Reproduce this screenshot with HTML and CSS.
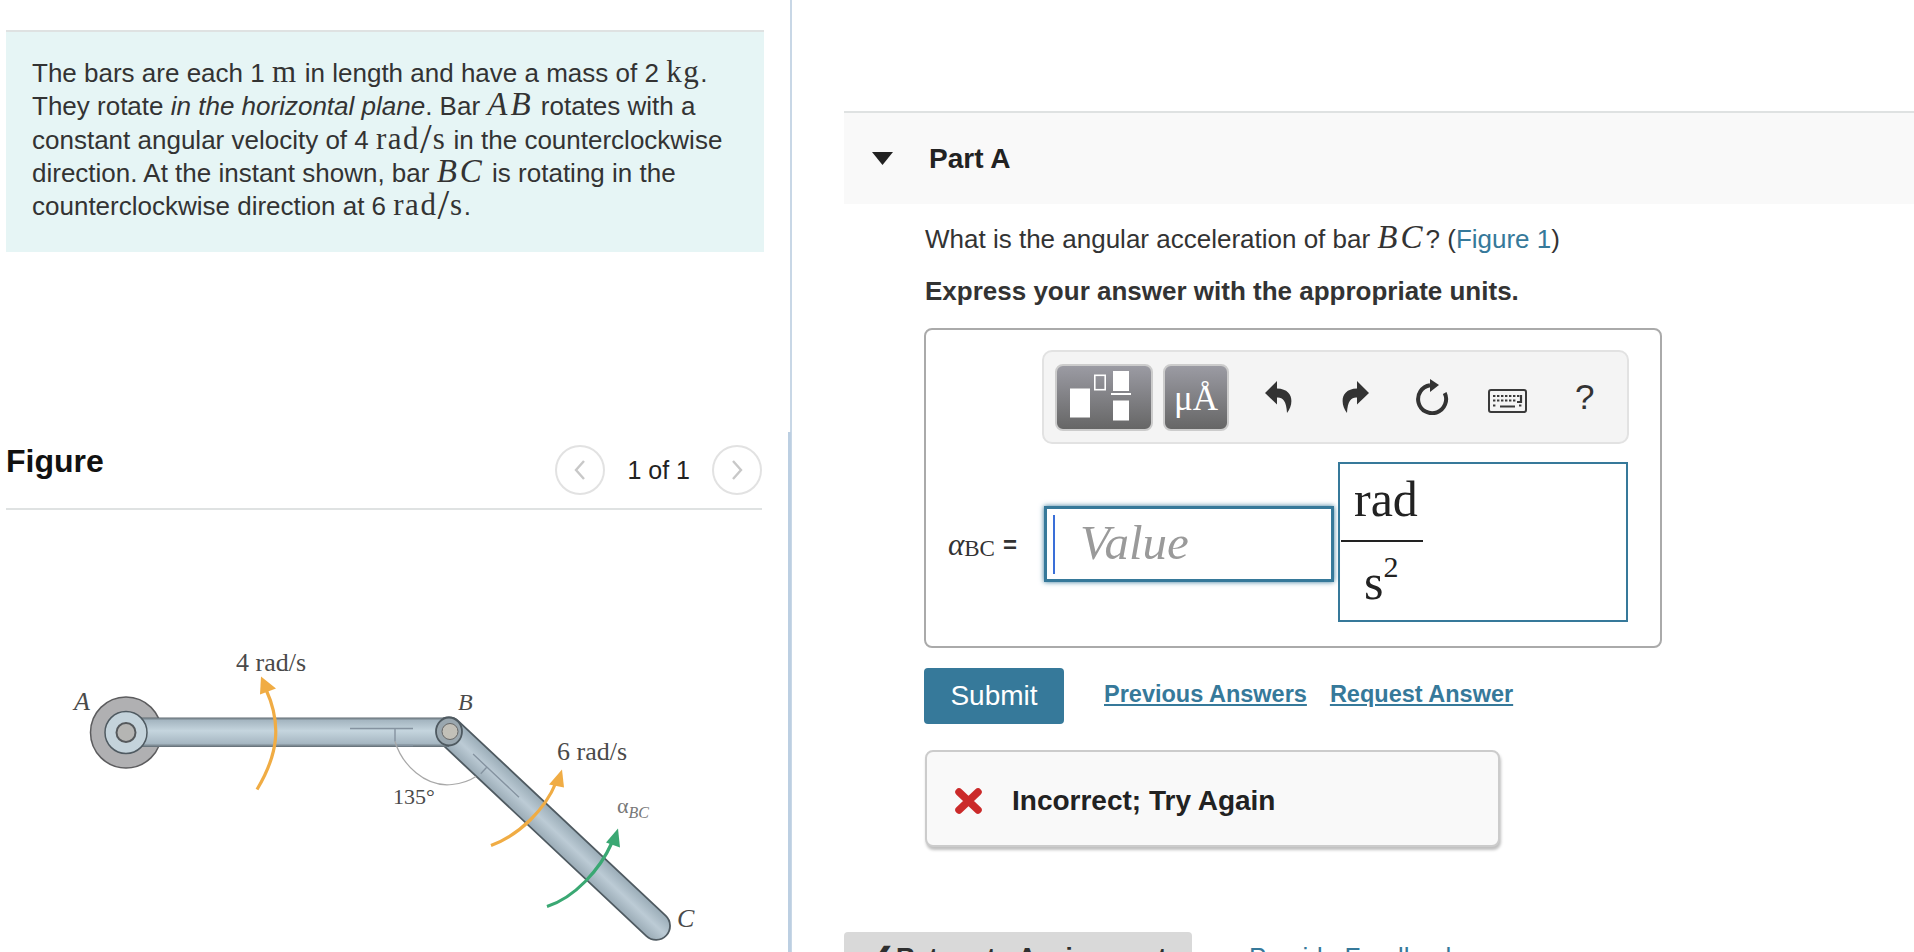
FILE: index.html
```html
<!DOCTYPE html>
<html lang="en">
<head>
<meta charset="utf-8">
<title>Part A</title>
<link rel="stylesheet" href="styles.css">
</head>
<body>
<div class="page">
  <aside class="left">
    <div class="problem">
      <p>The bars are each 1 <span class="mr">m</span> in length and have a mass of 2 <span class="mr">kg</span>. They rotate <em>in the horizontal plane</em>. Bar <span class="mi">AB</span> rotates with a constant angular velocity of 4 <span class="mr">rad</span><span class="sl">/</span><span class="mr">s</span> in the counterclockwise direction. At the instant shown, bar <span class="mi">BC</span> is rotating in the counterclockwise direction at 6 <span class="mr">rad</span><span class="sl">/</span><span class="mr">s</span>.</p>
    </div>
    <div class="fig-head">
      <h2>Figure</h2>
      <div class="pager">
        <button class="circle" aria-label="Previous"><svg width="14" height="24" viewBox="0 0 14 24"><path d="M11 3 3 12l8 9" fill="none" stroke="#c8c8c8" stroke-width="2.4"/></svg></button>
        <span class="count">1 of 1</span>
        <button class="circle" aria-label="Next"><svg width="14" height="24" viewBox="0 0 14 24"><path d="M3 3l8 9-8 9" fill="none" stroke="#c8c8c8" stroke-width="2.4"/></svg></button>
      </div>
    </div>
    <svg class="figure" width="790" height="442" viewBox="0 510.500 790 442">
      <defs>
        <linearGradient id="barh" x1="0" y1="0" x2="0" y2="1">
          <stop offset="0" stop-color="#5f6a71"/><stop offset=".1" stop-color="#a5b6c1"/><stop offset=".45" stop-color="#c5d5de"/><stop offset=".88" stop-color="#a6b7c2"/><stop offset="1" stop-color="#5f6a71"/>
        </linearGradient>
        <linearGradient id="bard" x1="0" y1="0" x2="0" y2="1">
          <stop offset="0" stop-color="#9aacb7"/><stop offset=".5" stop-color="#bccbd5"/><stop offset="1" stop-color="#9aabb6"/>
        </linearGradient>
      </defs>
      <g transform="translate(449 732) rotate(43.200)">
        <rect x="-14" y="-14" width="312" height="28" rx="14" fill="url(#bard)" stroke="#4f5a61" stroke-width="1.800"/>
        <path d="M33 0H96M52 0V9" stroke="#8593a0" stroke-width="1.400" fill="none"/>
      </g>
      <circle cx="126" cy="733" r="35.500" fill="#b0b0b2" stroke="#5c5c5e" stroke-width="1.500"/>
      <rect x="140" y="718" width="309" height="29.500" fill="url(#barh)"/>
      <path d="M350 729H413M395 729V742M395 746H413" stroke="#8593a0" stroke-width="1.400" fill="none"/>
      <circle cx="126" cy="733" r="21" fill="#c4d3db" stroke="#4f5a61" stroke-width="1.500"/>
      <circle cx="126" cy="733" r="9.500" fill="#b5b5b3" stroke="#55595c" stroke-width="2"/>
      <ellipse cx="449" cy="732" rx="13" ry="14" fill="#9aa7af" stroke="#4f5a61" stroke-width="1.800"/>
      <circle cx="450" cy="732" r="8" fill="#c2c0b8" stroke="#666" stroke-width="1"/>
      <path d="M395 742C402 765 425 788 452 785 462 784 470 781 476 777" stroke="#a8a8a8" stroke-width="1.200" fill="none"/>
      <path d="M257 790C278 755 282 725 266 690" stroke="#f0ac44" stroke-width="3.200" fill="none"/>
      <path d="M261 677 276 689 260 695Z" fill="#f0ac44"/>
      <path d="M491 846C520 835 545 810 556 783" stroke="#f0ac44" stroke-width="3.200" fill="none"/>
      <path d="M562 770 564 788 549 785Z" fill="#f0ac44"/>
      <path d="M547 907C575 898 600 870 612 843" stroke="#3aa873" stroke-width="3.200" fill="none"/>
      <path d="M618 829 620 848 606 843Z" fill="#3aa873"/>
      <g>
        <text x="236" y="671.500" class="lbl">4 rad/s</text>
        <text x="557" y="760" class="lbl">6 rad/s</text>
        <text x="393" y="804" class="lbl deg">135°</text>
        <text x="74" y="710" class="lbl it">A</text>
        <text x="458" y="710" class="lbl it small">B</text>
        <text x="677" y="927" class="lbl it">C</text>
        <text x="617" y="813" class="lbl grey">α<tspan class="sub it" dy="5">BC</tspan></text>
      </g>
    </svg>
  </aside>

  <main class="right">
    <header class="part-head">
      <svg class="tri" width="21" height="13" viewBox="0 0 21 13"><path d="M0 0H21L10.500 13Z" fill="#222"/></svg>
      <h3>Part A</h3>
    </header>
    <section class="part-body">
      <p class="q">What is the angular acceleration of bar <span class="mi">BC</span>? (<a href="#">Figure 1</a>)</p>
      <p class="hint">Express your answer with the appropriate units.</p>
      <div class="answer">
        <div class="toolbar">
          <button class="tb tb-wide" aria-label="Templates">
            <svg width="66" height="52" viewBox="0 0 66 52"><rect x="2" y="17.500" width="20" height="29" fill="#fff"/><rect x="26.800" y="4.300" width="10.400" height="14.400" fill="none" stroke="#fff" stroke-width="1.600"/><rect x="45" y="0" width="16" height="20" fill="#fff"/><rect x="43" y="22" width="20" height="2" fill="#fff"/><rect x="45" y="29.500" width="16" height="20" fill="#fff"/></svg>
          </button>
          <button class="tb tb-unit">μÅ</button>
          <div class="tools">
            <svg class="t-undo" width="27" height="32" viewBox="0 0 27 32"><path d="M12 0 0 12l12 11.500v-7C17 16 21.500 19 22 32c7-9 7-24-10-24.500z" fill="#333"/></svg>
            <svg class="t-redo" width="27" height="32" viewBox="0 0 27 32"><path d="M15 0 27 12 15 23.500v-7C10 16 5.500 19 5 32-2 23-2 8 15 7.500z" fill="#333"/></svg>
            <svg class="t-reset" width="34" height="36" viewBox="0 0 34 36"><path d="M15 6.300A14 14 0 1 0 29.700 14" fill="none" stroke="#333" stroke-width="4"/><path d="M15 0 24 6 15 13Z" fill="#333"/></svg>
            <svg class="t-keys" width="39" height="24" viewBox="0 0 39 24"><rect x="1" y="1" width="37" height="22" rx="2" fill="#f4f4f4" stroke="#3a3a3a" stroke-width="2"/><path d="M5 7H32M5 11.500H28M5 16.500H8M31 16.500H34" stroke="#3a3a3a" stroke-width="2.200" stroke-dasharray="2.400 1.600"/><path d="M12 17.500H27M33 6V13H29" stroke="#3a3a3a" stroke-width="2.200" fill="none"/></svg>
            <span class="help">?</span>
          </div>
        </div>
        <div class="row">
          <span class="var"><i>α</i><span class="bc">BC</span><span class="eq">=</span></span>
          <div class="value"><span class="caret"></span><span class="ph">Value</span></div>
          <div class="units">
            <div class="frac"><span class="num">rad</span><span class="den">s<sup>2</sup></span></div>
          </div>
        </div>
      </div>
      <div class="actions">
        <button class="submit">Submit</button>
        <a href="#" class="act act-first">Previous Answers</a>
        <a href="#" class="act">Request Answer</a>
      </div>
      <div class="feedback">
        <svg width="27" height="26" viewBox="0 0 27 26"><path d="M4 4 23 22M23 4 4 22" stroke="#cb2a2a" stroke-width="7.500" stroke-linecap="round"/></svg>
        <strong>Incorrect; Try Again</strong>
      </div>
    </section>
    <footer class="foot">
      <button class="return"><span class="chev">❮</span>Return to Assignment</button>
      <a href="#" class="provide">Provide Feedback</a>
    </footer>
  </main>
</div>
</body>
</html>
```
FILE: styles.css
```css
* { box-sizing: border-box; }
html, body { margin: 0; height: 952px; overflow: hidden; background: #fff; }
body { font-family: "Liberation Sans", Arial, sans-serif; font-size: 26px; color: #333; }
a { color: #36799a; text-decoration: none; }
button { font-family: inherit; cursor: pointer; }
.page { display: flex; height: 952px; overflow: hidden; }

.left { position: relative; width: 792px; flex: none; padding: 30px 0 0 6px; border-right: 2px solid #c8d7e6; }
.left::after { content: ""; position: absolute; top: 432px; bottom: 0; right: -1px; width: 3px; background: #bccfe2; }
.problem { width: 758px; background: #e6f5f5; border-top: 2px solid #dfe2e2; padding: 25px 26px 29px; }
.problem p { margin: 0; line-height: 33.3px; }
.mr { font-family: "Liberation Serif", serif; font-size: 31px; line-height: 0; letter-spacing: 1.5px; }
.mi { font-family: "Liberation Serif", serif; font-style: italic; font-size: 33px; line-height: 0; letter-spacing: 3px; }
.sl { font-family: "Liberation Serif", serif; font-size: 42px; font-weight: 400; line-height: 0; letter-spacing: 1px; vertical-align: -4px; }

.fig-head { width: 756px; height: 258px; border-bottom: 2px solid #dfe2e2; display: flex; justify-content: space-between; align-items: flex-end; padding-bottom: 13px; }
.fig-head h2 { margin: 0 0 14px; font-size: 32px; line-height: 40px; color: #111; }
.pager { display: flex; align-items: center; gap: 22px; }
.circle { width: 50px; height: 50px; border-radius: 50%; border: 2px solid #e2e2e2; background: #fff; padding: 0; display: flex; align-items: center; justify-content: center; }
.count { font-size: 25px; color: #222; }

.figure { display: block; margin-left: -6px; }
.lbl { font-family: "Liberation Serif", serif; font-size: 26px; fill: #4a4a4a; }
.deg { font-size: 22px; }
.it { font-style: italic; }
.small { font-size: 24px; }
.grey { font-size: 22px; fill: #777; }
.sub { font-size: 16px; }

.right { flex: 1; min-width: 0; padding: 111px 0 0 52px; }
.part-head { height: 93px; background: #f9f9f9; border-top: 2px solid #dfe2e2; display: flex; align-items: center; padding-left: 28px; }
.part-head h3 { margin: 0 0 0 36px; font-size: 28px; color: #222; }
.tri { flex: none; }
.part-body { padding: 19px 0 0 81px; }
.part-body p { margin: 0; line-height: 33px; }
.q { margin-bottom: 19px !important; }
.hint { font-weight: 700; margin-bottom: 20px !important; }

.answer { width: 738px; height: 320px; margin-left: -1px; border: 2px solid #aaa; border-radius: 8px; padding: 20px 0 0 22px; }
.toolbar { width: 587px; height: 94px; margin-left: 94px; background: #f4f4f4; border: 2px solid #e2e2e2; border-radius: 10px; display: flex; align-items: center; padding-left: 11px; gap: 10px; }
.tb { height: 67px; border: 2px solid #ccc; border-radius: 8px; background: linear-gradient(#9b9ba3, #666); color: #fff; padding: 0; display: flex; align-items: center; }
.tb-wide { width: 98px; padding-left: 11px; }
.tb-unit { width: 66px; justify-content: center; font-family: "Liberation Serif", serif; font-size: 35px; padding-top: 4px; }
.tools { display: flex; align-items: center; }
.t-undo { margin-left: 26px; }
.t-redo { margin-left: 50px; }
.t-reset { margin-left: 46px; }
.t-keys { margin: 8px 0 0 39px; }
.help { margin-left: 48px; font-size: 35px; line-height: 40px; }

.row { display: flex; align-items: center; margin-top: 18px; height: 160px; }
.var { width: 96px; margin-top: 5px; font-family: "Liberation Serif", serif; font-size: 31px; flex: none; display: flex; align-items: center; white-space: nowrap; }
.var i { line-height: 1; }
.bc { font-size: 23px; padding-top: 9px; }
.eq { font-family: "Liberation Sans", sans-serif; font-size: 24px; font-weight: 700; margin-left: 8px; }
.value { width: 290px; height: 76px; margin-top: 4px; border: 3px solid #36799a; box-shadow: 0 0 5px #36799a; display: flex; align-items: center; padding-left: 6px; background: #fff; flex: none; }
.caret { width: 2px; height: 59px; background: #3a6fd8; }
.ph { margin: -3px 0 0 25px; font-family: "Liberation Serif", serif; font-style: italic; font-size: 49px; color: #9a9a9a; }
.units { width: 290px; height: 160px; margin-left: 4px; border: 2px solid #36799a; padding: 0 0 0 1px; flex: none; font-family: "Liberation Serif", serif; color: #222; }
.frac { width: 82px; display: flex; flex-direction: column; align-items: center; }
.num { width: 100%; height: 78px; border-bottom: 2px solid #222; font-size: 50px; line-height: 70px; text-align: left; padding-left: 13px; }
.den { width: 100%; font-size: 50px; line-height: 80px; text-align: left; padding-left: 23px; }
.den sup { font-size: 30px; line-height: 0; vertical-align: 22px; }

.actions { display: flex; align-items: center; margin: 20px 0 0 -1px; }
.submit { width: 140px; height: 56px; background: #36799a; border: 0; border-radius: 4px; color: #fff; font-size: 28px; padding: 0; }
.act { font-weight: 700; font-size: 23.5px; text-decoration: underline; margin: -4px 0 0 23px; }
.act-first { margin-left: 40px; }

.feedback { width: 575px; height: 97px; margin: 26px 0 0 0; background: #f9f9f9; border: 2px solid #ccc; border-radius: 8px; box-shadow: 1px 3px 3px rgba(0,0,0,.25); display: flex; align-items: center; padding: 4px 0 0 28px; gap: 30px; }
.feedback strong { font-size: 28px; color: #222; }

.foot { display: flex; align-items: flex-start; margin-top: 85px; gap: 57px; }
.return { width: 348px; height: 60px; background: #d9d9d9; border: 0; border-radius: 4px 4px 0 0; font-weight: 700; font-size: 26px; color: #2f2f2f; padding: 0 0 10px 28px; text-align: left; display: block; white-space: nowrap; }
.chev { display: inline-block; width: 24px; font-size: 26px; }
.provide { font-size: 26px; line-height: 30px; margin-top: 10px; }
```
